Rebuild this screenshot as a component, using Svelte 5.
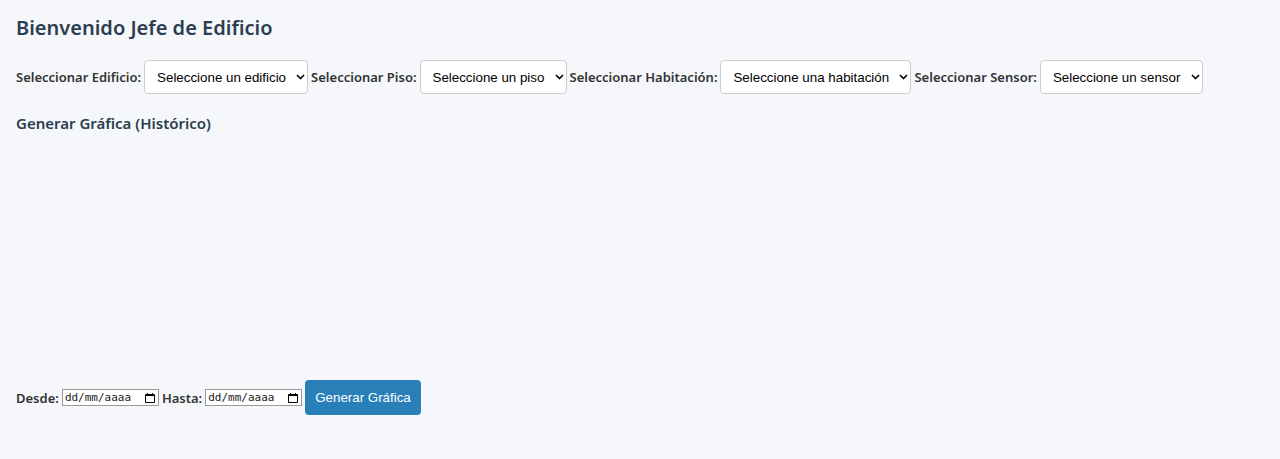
<script>
  const filters = [
    { id: 'edificio', label: 'Seleccionar Edificio:', hint: 'Seleccione un edificio' },
    { id: 'piso', label: 'Seleccionar Piso:', hint: 'Seleccione un piso' },
    { id: 'habitacion', label: 'Seleccionar Habitación:', hint: 'Seleccione una habitación' },
    { id: 'sensor', label: 'Seleccionar Sensor:', hint: 'Seleccione un sensor' }
  ];
  const dates = [
    { id: 'desde', label: 'Desde:' },
    { id: 'hasta', label: 'Hasta:' }
  ];
</script>

<main>
  <h1>Bienvenido Jefe de Edificio</h1>
  <form class="filters">
    {#each filters as f}
      <label for={f.id}>{f.label}</label>
      <select id={f.id}><option>{f.hint}</option></select>
    {/each}
  </form>
  <h2>Generar Gráfica (Histórico)</h2>
  <div class="chart"></div>
  <form class="range">
    {#each dates as d}
      <label for={d.id}>{d.label}</label>
      <span class="date">
        <input id={d.id} type="text" inputmode="numeric" placeholder="dd/mm/aaaa" />
        <svg viewBox="0 0 10 10" width="10" height="10" aria-hidden="true">
          <path fill="#000" fill-rule="evenodd" d="M1 1h1V0h1v1h4V0h1v1h1q1 0 1 1v7q0 1-1 1H1q-1 0-1-1V2q0-1 1-1zM1 3v6h8V3z" />
        </svg>
      </span>
    {/each}
    <button type="button">Generar Gráfica</button>
  </form>
</main>

<style>
  :global(body) { background: #f5f7fb; }
  main {
    padding: 16px;
    font-family: "Segoe UI", "Noto Sans", sans-serif;
    font-size: 13px;
    line-height: 16px;
    color: #333;
  }
  h1, h2 { margin: 0; color: #2c3e50; font-weight: 600; }
  h1 { font-size: 20px; line-height: 24px; }
  h2 { font-size: 15px; line-height: 18px; }
  form { display: flex; flex-wrap: wrap; align-items: center; gap: 3px; }
  .filters { margin: 20px 0; }
  label { font-weight: 600; }
  select {
    appearance: none;
    height: 34px;
    padding: 8px 21px 8px 12px;
    border: 1px solid #ccc;
    border-radius: 4px;
    background: #fff url("data:image/svg+xml,%3Csvg xmlns='http://www.w3.org/2000/svg' width='9' height='6'%3E%3Cpath d='M1 1l3.5 3.5L8 1' fill='none' stroke='%23000' stroke-width='1.6'/%3E%3C/svg%3E") no-repeat right 2px center;
    color: #000;
    font-family: "Liberation Sans", Arial, sans-serif;
  }
  .chart { height: 248px; }
  .date {
    display: flex;
    align-items: center;
    box-sizing: border-box;
    width: 97px;
    height: 17px;
    padding: 0 3px 0 2px;
    border: 1px solid #999;
    background: #fff;
  }
  .date input {
    flex: 1;
    min-width: 0;
    padding: 0;
    border: 0;
    outline: 0;
    background: none;
    font: 11px/15px "DejaVu Sans Mono", monospace;
  }
  .date input::placeholder { color: #222; }
  .date svg { flex: none; }
  button {
    padding: 10px;
    border: 0;
    border-radius: 4px;
    background: #2980b9;
    color: #fff;
    font-family: "Liberation Sans", Arial, sans-serif;
  }
</style>
